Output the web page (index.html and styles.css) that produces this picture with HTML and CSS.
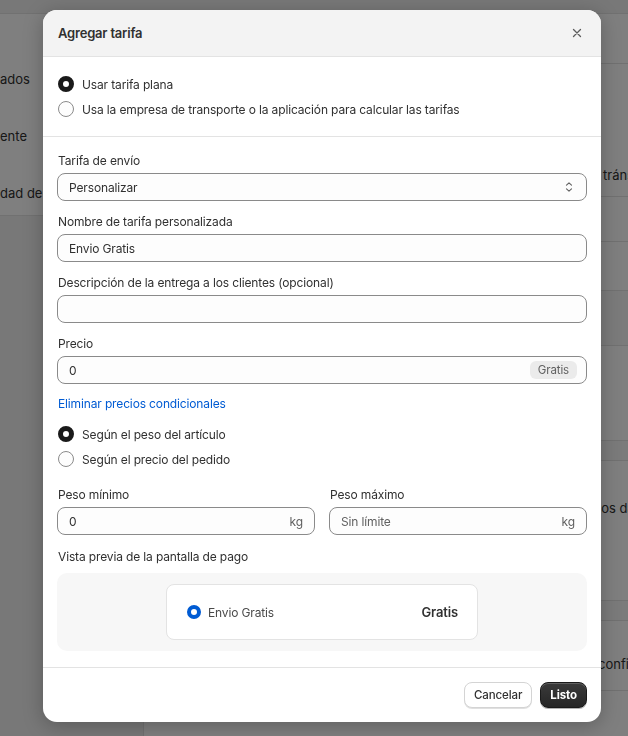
FILE: index.html
```html
<!DOCTYPE html>
<html lang="es">
<head>
<meta charset="utf-8">
<title>Agregar tarifa</title>
<link rel="stylesheet" href="styles.css">
</head>
<body>
<div class="page">
  <aside class="side">
    <div class="side-card">
      <div class="nav-item">ados</div>
      <div class="nav-item">ente</div>
      <div class="nav-item">dad de la tienda</div>
    </div>
  </aside>
  <main class="main">
    <div class="card">
      <div class="row r1"></div>
      <div class="row r2"><span class="row-text">tránsito</span></div>
      <div class="row r3"></div>
      <div class="row r4"></div>
      <div class="row r5 band"></div>
      <div class="row r6"></div>
      <div class="row r7 band"></div>
      <div class="row r8"><span class="row-text">los datos</span></div>
      <div class="row r9 band"></div>
      <div class="row r10"><span class="row-text">configurar</span></div>
      <div class="row r11">
        <span class="ghost-btn"></span>
        <span class="ghost-link">Más información sobre Markets</span>
      </div>
    </div>
  </main>
</div>

<div class="overlay"></div>

<div class="modal" role="dialog" aria-label="Agregar tarifa">
  <header class="modal-head">
    <h2 class="modal-title">Agregar tarifa</h2>
    <button class="close" aria-label="Cerrar">
      <svg width="10" height="10" viewBox="0 0 10 10"><path d="M1.5 1.5l7 7M8.5 1.5l-7 7" stroke="#5c5c5c" stroke-width="1.3" stroke-linecap="round" fill="none"/></svg>
    </button>
  </header>

  <section class="sec sec-type">
    <label class="radio"><span class="dot on"></span><span>Usar tarifa plana</span></label>
    <label class="radio"><span class="dot"></span><span>Usa la empresa de transporte o la aplicación para calcular las tarifas</span></label>
  </section>

  <section class="sec sec-form">
    <div class="field">
      <div class="label">Tarifa de envío</div>
      <div class="input select">
        <span>Personalizar</span>
        <svg class="chev" width="10" height="14" viewBox="0 0 10 14"><path d="M2.5 5.2L5 2.8l2.5 2.4M2.5 8.8L5 11.2l2.5-2.4" stroke="#616161" stroke-width="1.1" fill="none" stroke-linecap="round" stroke-linejoin="round"/></svg>
      </div>
    </div>
    <div class="field">
      <div class="label">Nombre de tarifa personalizada</div>
      <div class="input"><span>Envio Gratis</span></div>
    </div>
    <div class="field">
      <div class="label">Descripción de la entrega a los clientes (opcional)</div>
      <div class="input"></div>
    </div>
    <div class="field">
      <div class="label">Precio</div>
      <div class="input"><span>0</span><span class="badge">Gratis</span></div>
    </div>

    <a class="link">Eliminar precios condicionales</a>

    <div class="cond">
      <label class="radio"><span class="dot on"></span><span>Según el peso del artículo</span></label>
      <label class="radio"><span class="dot"></span><span>Según el precio del pedido</span></label>
    </div>

    <div class="weights">
      <div class="field">
        <div class="label">Peso mínimo</div>
        <div class="input"><span>0</span><span class="suffix">kg</span></div>
      </div>
      <div class="field">
        <div class="label">Peso máximo</div>
        <div class="input"><span class="ph">Sin límite</span><span class="suffix">kg</span></div>
      </div>
    </div>

    <div class="label preview-label">Vista previa de la pantalla de pago</div>
    <div class="preview">
      <div class="preview-card">
        <span class="pdot"></span>
        <span class="pname">Envio Gratis</span>
        <span class="pprice">Gratis</span>
      </div>
    </div>
  </section>

  <footer class="modal-foot">
    <button class="btn">Cancelar</button>
    <button class="btn primary">Listo</button>
  </footer>
</div>
</body>
</html>
```

FILE: styles.css
```css
* { box-sizing: border-box; }

html, body {
  margin: 0;
  padding: 0;
  height: 100%;
}

body {
  font-family: Inter, "Noto Sans", "Liberation Sans", sans-serif;
  font-size: 12px;
  letter-spacing: -0.14px;
  color: #303030;
  background: #f1f1f1;
  overflow: hidden;
}

/* ---------- background page ---------- */
.page {
  display: flex;
  height: 736px;
  border-top: 1px solid #e3e3e3;
  margin-top: 13px;
}

.side {
  width: 143px;
  flex: none;
}

.side-card {
  background: #ffffff;
  height: 202px;
  border-bottom: 1px solid #e3e3e3;
  display: flex;
  flex-direction: column;
  padding-top: 56px;
  gap: 39px;
}

.nav-item {
  width: 43px;
  overflow: hidden;
  font-size: 13px;
  letter-spacing: 0;
  line-height: 18px;
  color: #303030;
  white-space: nowrap;
}

.main {
  flex: 1;
  background: #f1f1f1;
  border-left: 1px solid #e3e3e3;
}

.card {
  background: #ffffff;
  display: flex;
  flex-direction: column;
}

.row {
  border-bottom: 1px solid #e3e3e3;
  display: flex;
  align-items: center;
  padding-left: 459px;
}

.row.band { background: #f7f7f7; }

.row-text {
  font-size: 13px;
  letter-spacing: 0;
  line-height: 18px;
  white-space: nowrap;
}

.r1 { height: 50px; }
.r2 { height: 133px; align-items: flex-start; padding-top: 102px; }
.r3 { height: 45px; }
.r4 { height: 49px; }
.r5 { height: 55px; }
.r6 { height: 95px; }
.r7 { height: 20px; }
.r8 { height: 140px; align-items: flex-start; padding-top: 38px; padding-left: 454px; }
.r9 { height: 20px; }
.r10 { height: 70px; align-items: flex-start; padding-top: 34px; padding-left: 454px; }
.r11 {
  height: 60px;
  padding-left: 14px;
  gap: 14px;
  align-items: flex-start;
  padding-top: 4px;
  border-bottom: none;
}

.ghost-btn {
  display: inline-block;
  width: 83px;
  height: 26px;
  border: 1px solid #8a8a8a;
  border-radius: 8px;
}

.ghost-link {
  color: #1f3a78;
  text-decoration: underline;
  font-size: 13px;
  letter-spacing: 0;
  line-height: 18px;
  margin-top: 4px;
}

.overlay {
  position: fixed;
  inset: 0;
  background: rgba(0, 0, 0, 0.5);
}

/* ---------- modal ---------- */
.modal {
  position: absolute;
  left: 43px;
  top: 10px;
  width: 558px;
  background: #ffffff;
  border-radius: 14px;
  overflow: hidden;
  box-shadow: 0 4px 20px rgba(0, 0, 0, 0.25);
}

.modal-head {
  height: 47px;
  background: #f3f3f3;
  border-bottom: 1px solid #e3e3e3;
  display: flex;
  align-items: center;
  justify-content: space-between;
  padding: 0 16px 0 15px;
}

.modal-title {
  margin: 0;
  font-size: 13px;
  letter-spacing: -0.2px;
  font-weight: 600;
  color: #303030;
}

.close {
  border: 0;
  background: none;
  padding: 0;
  width: 16px;
  height: 16px;
  display: flex;
  align-items: center;
  justify-content: center;
  cursor: pointer;
}

.sec {
  padding: 0 14px;
  border-bottom: 1px solid #e3e3e3;
}

.sec-type {
  padding-top: 16px;
  padding-bottom: 16px;
  display: flex;
  flex-direction: column;
  gap: 3px;
}

.radio {
  display: flex;
  align-items: center;
  gap: 8px;
  height: 22px;
  padding-left: 1px;
  font-size: 12px;
  color: #303030;
}

.dot {
  width: 16px;
  height: 16px;
  border-radius: 50%;
  border: 1px solid #8a8a8a;
  background: #fdfdfd;
  flex: none;
}

.dot.on {
  border: 5px solid #1a1a1a;
  background: #ffffff;
}

.sec-form {
  padding-top: 15px;
  padding-bottom: 16px;
  display: flex;
  flex-direction: column;
}

.field {
  display: flex;
  flex-direction: column;
  margin-bottom: 12px;
}

.label {
  font-size: 12px;
  line-height: 18px;
  color: #303030;
  margin-bottom: 3px;
  padding-left: 1px;
}

.input {
  height: 28px;
  border: 1px solid #8a8a8a;
  border-radius: 8px;
  background: #fdfdfd;
  display: flex;
  align-items: center;
  justify-content: space-between;
  padding: 0 11px;
  font-size: 12px;
  color: #303030;
}

.select { padding-right: 12px; }

.badge {
  background: #ebebeb;
  color: #616161;
  border-radius: 6px;
  font-size: 11.5px;
  line-height: 18px;
  padding: 0 8px;
  margin-right: -2px;
}

.suffix { color: #616161; }

.ph { color: #616161; }

.link {
  color: #005bd3;
  font-size: 12px;
  line-height: 18px;
  margin-top: -1px;
  margin-bottom: 1px;
  padding-left: 1px;
}

.cond {
  display: flex;
  flex-direction: column;
  gap: 3px;
  margin-top: 9px;
  margin-bottom: 16px;
}

.weights {
  display: grid;
  grid-template-columns: 1fr 1fr;
  gap: 14px;
}

.weights .field { margin-bottom: 13px; }

.preview-label {
  margin-bottom: 7px;
}

.preview {
  height: 78px;
  background: #f7f7f7;
  border-radius: 10px;
  display: flex;
  align-items: center;
  justify-content: center;
}

.preview-card {
  width: 312px;
  height: 56px;
  background: #ffffff;
  border: 1px solid #e3e3e3;
  border-radius: 8px;
  display: flex;
  align-items: center;
  padding: 0 19px 0 20px;
}

.pdot {
  width: 14px;
  height: 14px;
  border-radius: 50%;
  border: 4px solid #005bd3;
  background: #ffffff;
  flex: none;
}

.pname {
  margin-left: 7px;
  font-size: 12px;
  color: #4a4a4a;
  flex: 1;
}

.pprice {
  font-size: 13px;
  font-weight: 600;
  color: #303030;
}

.modal-foot {
  display: flex;
  justify-content: flex-end;
  gap: 8px;
  padding: 14px 14px 14px;
}

.btn {
  height: 26px;
  padding: 0 9px;
  border-radius: 8px;
  border: 1px solid #d4d4d4;
  background: #ffffff;
  font-family: inherit;
  font-size: 11.5px;
  letter-spacing: -0.1px;
  font-weight: 500;
  color: #303030;
  box-shadow: 0 1px 0 rgba(0, 0, 0, 0.12);
}

.btn.primary {
  background: linear-gradient(#3a3a3a, #262626);
  border-color: #1a1a1a;
  color: #ffffff;
  font-weight: 700;
  padding: 0 9px;
  box-shadow: inset 0 1px 0 rgba(255, 255, 255, 0.2), 0 1px 0 rgba(0, 0, 0, 0.3);
}
```
